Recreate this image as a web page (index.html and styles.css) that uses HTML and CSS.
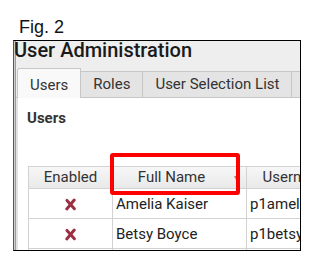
FILE: index.html
```html
<!DOCTYPE html>
<html>
<head>
<meta charset="utf-8">
<link rel="stylesheet" href="styles.css">
</head>
<body>
<div class="fig">Fig. 2</div>
<div class="window">
  <div class="title">User Administration</div>
  <div class="tabs">
    <div class="tab active">Users</div>
    <div class="tab">Roles</div>
    <div class="tab">User Selection List</div>
    <div class="tab tab-more"></div>
  </div>
  <div class="panel">
    <div class="section">Users</div>
    <div class="grid">
      <div class="hcell"><span class="hlabel">Enabled</span></div>
      <div class="hcell sortable"><span class="hlabel">Full Name</span><span class="arrow">&#9662;</span></div>
      <div class="hcell sortable"><span class="hlabel">Username</span><span class="arrow">&#9662;</span></div>

      <div class="cell center"><svg class="xicon" viewBox="0 0 14 14" width="13" height="13"><path d="M3.2 2.6 L11.2 11.6" /><path d="M11 2.2 L3 11.8" /></svg></div>
      <div class="cell">Amelia Kaiser</div>
      <div class="cell">p1amelia</div>

      <div class="cell center"><svg class="xicon" viewBox="0 0 14 14" width="13" height="13"><path d="M3.2 2.6 L11.2 11.6" /><path d="M11 2.2 L3 11.8" /></svg></div>
      <div class="cell">Betsy Boyce</div>
      <div class="cell">p1betsy</div>

      <div class="cell center"><svg class="xicon" viewBox="0 0 14 14" width="13" height="13"><path d="M3.2 2.6 L11.2 11.6" /><path d="M11 2.2 L3 11.8" /></svg></div>
      <div class="cell"></div>
      <div class="cell"></div>
    </div>
  </div>
  <div class="highlight"></div>
</div>
</body>
</html>
```
FILE: styles.css
```css
html, body {
  margin: 0;
  padding: 0;
  background: #ffffff;
}
body {
  width: 317px;
  height: 267px;
  overflow: hidden;
}
.fig {
  font-family: "Liberation Sans", Arial, sans-serif;
  font-size: 18px;
  line-height: 20px;
  color: #111;
  margin-top: 17px;
  padding-left: 19px;
}
.window {
  position: relative;
  box-sizing: border-box;
  margin-top: 3px;
  margin-left: 13px;
  width: 288px;
  height: 211px;
  border: 1px solid #000;
  border-left: 1px solid #555;
  padding-left: 2px;
  background: linear-gradient(to right, #cfcfcf 0, #cfcfcf 1px, #9c9c9c 1px, #9c9c9c 2px, #eeeeee 2px);
  display: flex;
  flex-direction: column;
  overflow: hidden;
  font-family: Roboto, "Noto Sans", sans-serif;
}
.title {
  font-size: 20px;
  font-weight: 500;
  line-height: 18px;
  height: 18px;
  color: #1a1a1a;
  margin-left: -2px;
  white-space: nowrap;
}
.tabs {
  display: flex;
  align-items: flex-end;
  padding-top: 9px;
  padding-left: 1px;
  border-bottom: 1px solid #c6c6c6;
  white-space: nowrap;
}
.tab {
  box-sizing: border-box;
  height: 26px;
  line-height: 25px;
  padding: 0 12px;
  font-size: 15px;
  color: #333;
  background: #e4e4e4;
  border: 1px solid #c6c6c6;
  border-bottom: none;
  margin-right: -1px;
  flex: none;
}
.tab-more {
  width: 40px;
}
.tab.active {
  height: 30px;
  padding-top: 4px;
  margin-bottom: -1px;
  background: #f9f9f9;
  border-top-left-radius: 3px;
  position: relative;
}
.panel {
  flex: 1;
  background: #ffffff;
  border-left: 2px solid #e2e2e2;
  padding-top: 11px;
  padding-left: 10px;
  overflow: hidden;
}
.section {
  font-size: 15px;
  font-weight: 700;
  line-height: 18px;
  color: #333;
  margin-left: -1px;
}
.grid {
  margin-top: 39px;
  display: grid;
  grid-template-columns: 84px 134px 116px;
  grid-template-rows: 22px 30px 30px 30px;
  border-left: 1px solid #d2d2d2;
  border-top: 1px solid #d2d2d2;
  width: max-content;
}
.hcell, .cell {
  box-sizing: border-box;
  border-right: 1px solid #d2d2d2;
  border-bottom: 1px solid #d2d2d2;
  font-size: 15px;
  display: flex;
  align-items: center;
  white-space: nowrap;
  overflow: hidden;
}
.hcell {
  background: linear-gradient(#f7f7f7, #e9e9e9);
  color: #333;
  padding-bottom: 1px;
}
.hlabel {
  flex: 1;
  text-align: center;
}
.sortable {
  padding-right: 4px;
}
.arrow {
  width: 12px;
  text-align: center;
  font-size: 8px;
  color: #8a8a8a;
}
.cell {
  color: #222;
  padding-left: 3px;
  padding-top: 1px;
}
.cell.center {
  justify-content: center;
  padding-left: 0;
}
.xicon path {
  fill: none;
  stroke: #9a3041;
  stroke-width: 3.2;
  stroke-linecap: round;
}
.highlight {
  position: absolute;
  left: 96px;
  top: 112px;
  width: 130px;
  height: 42px;
  box-sizing: border-box;
  border: 4px solid #ff0000;
  border-radius: 3px;
}
```
